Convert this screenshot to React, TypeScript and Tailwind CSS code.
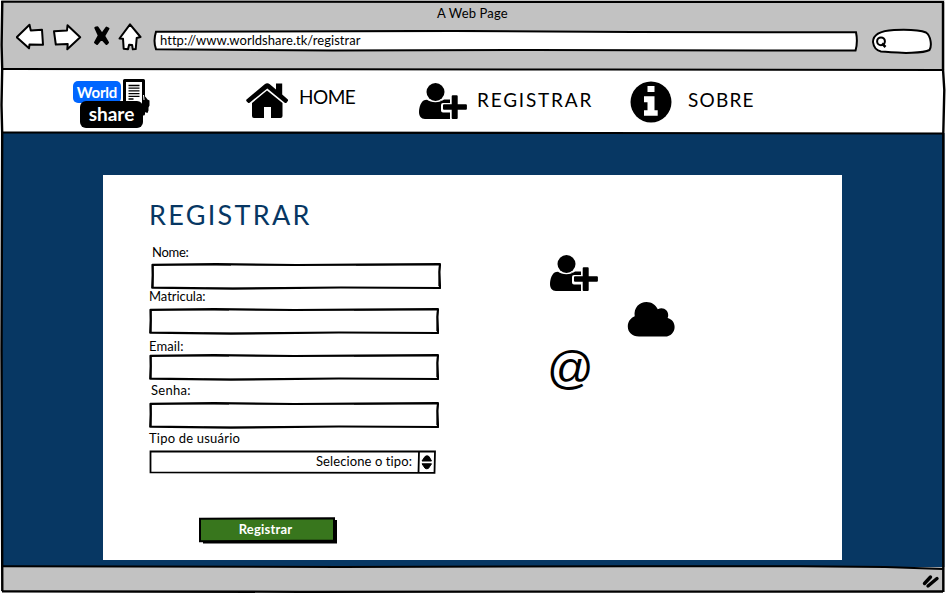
import React from "react";

type IconProps = { className?: string };

function UserPlusIcon({ className = "" }: IconProps) {
  return (
    <svg viewBox="0 0 48 36" className={`block h-9 w-12 shrink-0 ${className}`}>
      <path d="M6 17 C2 18 0 24 0 29 C0 33 2 36 6 36 H31 V16.5 H25 C21 20 12 20 8 16.7Z" fill="#000" />
      <circle cx="16.5" cy="9" r="10" fill="#fff" />
      <circle cx="16.5" cy="9" r="9" fill="#000" />
      <path d="M24 20 Q22 20 22 22V27.5Q22 29.5 24 29.5H31V37.5H40V20Z" fill="#fff" />
      <path d="M21 17.8h6.5l1.5 2.2h-6z" fill="#000" />
      <path d="M33.7 12.2h4q1 0 1 1v8h8.2q1 0 1 1v3.6q0 1-1 1h-8.2v8.2q0 1-1 1h-4q-1 0-1-1v-8.2H25q-1 0-1-1v-3.6q0-1 1-1h7.7v-8q0-1 1-1z" fill="#000" />
    </svg>
  );
}

function HomeIcon() {
  return (
    <svg viewBox="0 0 42 35" className="block h-[35px] w-[42px] shrink-0">
      <path d="M6 20 21 7.4 36.5 20V33q0 2-2 2H25V24H18V35H8q-2 0-2-2Z" />
      <path d="M.5 18.2Q-.3 17 .8 16.2L18.7 1.2Q21.3-.9 23.8 1.2L30 6.4V.5h6.2v11.1l5.4 4.6q1 .9.2 1.9l-1.3 1.6q-.8.8-1.8 0L21.3 5.4 3.6 19.8q-1 .7-1.8-.2Z" />
    </svg>
  );
}

function InfoIcon() {
  return (
    <svg viewBox="0 0 42 42" className="block h-[42px] w-[42px] shrink-0">
      <circle cx="21" cy="21" r="20.5" />
      <path d="M17.5 5h7v6h-7zM14 15.2h10.5v14h3.2v5.5H14v-5.5h3.5v-8H14z" fill="#fff" />
    </svg>
  );
}

function CloudIcon() {
  return (
    <svg viewBox="0 0 48 36" className="block h-9 w-12">
      <path d="M12 35.5C5 35.5.8 31 .8 25.5c0-5 3-8.5 6.9-10.2C6.5 6.5 12.5 1 19.5 1c5 0 9.2 2.8 11.3 7.3 5-2.8 10.6.5 10.4 6 0 1-.2 1.8-.6 2.6 4 .9 7 4.4 7 9 0 5.3-4 9.6-9.6 9.6Z" />
    </svg>
  );
}

function DocumentIcon() {
  return (
    <svg viewBox="0 0 30 37" className="absolute left-[50px] top-0 h-[37px] w-[30px]">
      <path d="M1.5 1.5h19V35h-19z" fill="#fff" stroke="#000" strokeWidth="3" strokeLinejoin="round" />
      <path d="M5.5 6.5h11M5.5 9.2h11M5.5 11.9h11M5.5 14.6h11M5.5 17.3h11M5.5 20h5" stroke="#000" strokeWidth="1.3" />
      <path d="M21 16.5l2 2 1.5 2 2 1v5l-1 2v3l-1 2.5-3-1-.5-3-2-1v-10z" fill="#000" />
      <path d="M20.5 16l.5 5" stroke="#fff" />
    </svg>
  );
}

function ToolbarIcons() {
  return (
    <svg viewBox="0 0 128 30" className="block h-[30px] w-32 shrink-0" fill="#fff" stroke="#000" strokeWidth="2" strokeLinejoin="round">
      <path d="M.7 14.3 13.5 1.8 14.8 7.6 26 6.8 27 21.8 13.5 21.5 13 25.3Z" />
      <path d="M38 8.3 51 7.5 51.5 2.3 64.2 14.3 51.3 26.3 51.7 21.1 39.8 21.5Z" />
      <path d="M79.3 4.8 81.5 4.3 86 10.8 90.5 4.6 92.5 5.6 88.2 13 92 19.5 90.5 21 85.5 15.5 81 21 79 19.5 82.8 12.5Z" fill="#000" />
      <path d="M114 1.3 124.5 14 120.7 15 119.7 26.1 116.8 26.3 116.1 22 113.1 21.7 112 26.3 107.7 25.8 107 15.8 103.5 15.5Z" />
    </svg>
  );
}

function SketchOutline() {
  return (
    <svg viewBox="0 0 290 27" preserveAspectRatio="none" className="absolute inset-0 h-full w-full" fill="none" stroke="#000" strokeLinejoin="round">
      <path d="M1.5 1.8 65 1.2 145 2 210 1.7 289 1.2 288.4 9 289 25 190 24.5 82 25.6 1.2 24.7 1.7 12Z" strokeWidth="2.2" />
      <path d="M2 1.5 80 2M205 2 288 1.5M288.5 4 288 23M2 3 2 24M55 25.3 150 25.2" strokeWidth="1.2" />
    </svg>
  );
}

type FieldProps = { label: string; labelClass: string; inputClass: string };

function Field({ label, labelClass, inputClass }: FieldProps) {
  return (
    <div>
      <div className={`h-4 whitespace-nowrap text-[13px] leading-4 ${labelClass}`}>{label}</div>
      <div className={`relative h-[27px] w-[290px] ${inputClass}`}>
        <SketchOutline />
      </div>
    </div>
  );
}

function BrowserBar() {
  return (
    <header className="flex h-[70px] flex-col bg-[#c2c2c2]">
      <div className="ml-[437px] mt-[5px] h-4 whitespace-nowrap text-[13px] leading-4 tracking-[0.15px]">A Web Page</div>
      <div className="flex h-[30px] pl-4">
        <div className="mt-[2px]"><ToolbarIcons /></div>
        <div className="relative ml-[9px] mt-[9px] h-[22px] w-[706px]">
          <svg viewBox="0 0 706 22" className="absolute inset-0 h-full w-full" fill="#fff" stroke="#000" strokeWidth="2">
            <path d="M3 1.7 300 .9 480 2 703 2.3Q705 12 702.5 20.6L380 20 180 20.5 3 19.2Q0 11 3 1.7Z" />
          </svg>
          <span className="relative ml-[7px] block whitespace-nowrap pt-[2px] text-[13px] leading-4 tracking-[0.03px]">http://www.worldshare.tk/registrar</span>
        </div>
        <svg viewBox="0 0 60 26" className="ml-[13px] mt-[7px] block h-[26px] w-[60px] shrink-0" stroke="#000" fill="#fff" strokeWidth="2">
          <path d="M1 14C1 5 11 2.6 22 2 34 1.5 48 2 54 4.5 59 8 60 18 57.5 22 52 25 42 24.5 34 25 24 24.5 15 24 9 23.5Q2 22 1 14Z" />
          <circle cx="9" cy="13.3" r="3.9" />
          <path d="m10 15.5 3.5 3.5" strokeWidth="2.5" />
        </svg>
      </div>
    </header>
  );
}

function Logo() {
  return (
    <div className="relative ml-[73px] mt-[9px] h-[50px] w-[80px] shrink-0 text-white">
      <DocumentIcon />
      <div className="absolute left-0 top-[2px] h-[22px] w-12 rounded-[5px] bg-[#0066ff] text-center text-[15px] font-bold leading-[22px] tracking-[-0.2px]">World</div>
      <div className="absolute left-[7px] top-[22px] h-[27px] w-[63px] rounded-md bg-black text-center text-[19px] font-bold leading-[26px]">share</div>
    </div>
  );
}

function Navigation() {
  return (
    <nav className="flex h-[63px] items-start bg-white text-[19px] leading-6">
      <Logo />
      <div className="ml-[93px] mt-[13px]"><HomeIcon /></div>
      <span className="ml-[11px] mt-[15px] w-[61px] whitespace-nowrap tracking-[-0.5px]">HOME</span>
      <UserPlusIcon className="ml-[59px] mt-[13px]" />
      <span className="ml-[10px] mt-[18px] w-[120px] whitespace-nowrap tracking-[1.8px]">REGISTRAR</span>
      <div className="ml-[33px] mt-[11px]"><InfoIcon /></div>
      <span className="ml-4 mt-[18px] whitespace-nowrap tracking-[1.2px]">SOBRE</span>
    </nav>
  );
}

function RegistrationForm() {
  return (
    <div className="w-[400px] pl-[46px] pt-6">
      <h1 className="h-8 whitespace-nowrap text-[27px] leading-8 tracking-[2.3px] text-[#073763]">REGISTRAR</h1>
      <div className="mt-[13px]">
        <Field label="Nome:" labelClass="ml-[3px] tracking-[-0.3px]" inputClass="ml-[2px] mt-[3px]" />
      </div>
      <div className="-mt-[2px]">
        <Field label="Matricula:" labelClass="tracking-[-0.05px]" inputClass="mt-1" />
      </div>
      <div className="mt-[3px]">
        <Field label="Email:" labelClass="tracking-[0.1px]" inputClass="" />
      </div>
      <div className="mt-px">
        <Field label="Senha:" labelClass="ml-[2px] tracking-[0.3px]" inputClass="mt-1" />
      </div>
      <div className="mt-px h-4 text-[13px] leading-4 tracking-[0.2px]">Tipo de usuário</div>
      <div className="relative mt-1 flex h-6 w-[287px] justify-end pr-6 pt-[3px] text-[13px] leading-4 tracking-[0.1px]">
        <svg viewBox="0 0 287 24" className="absolute inset-0 h-full w-full" fill="none" stroke="#000" strokeWidth="1.8">
          <path d="M1.5 1.5H286L285.5 22.8 1.5 22.4ZM270 1.5 269.5 22.5" />
          <path d="m273 11 3-4.5q2-1.5 4 0L282.5 11ZM273 13.8h9.5l-3 4.5q-1.7 1-3.4 0Z" fill="#000" strokeWidth="1" strokeLinejoin="round" />
        </svg>
        Selecione o tipo:
      </div>
      <button className="relative ml-[50px] mt-[43px] block h-[27px] w-[138px] text-[13px] font-bold text-white">
        <svg viewBox="0 0 138 27" className="absolute inset-0 h-full w-full">
          <path d="M4 3H138V26.5H4Z" />
          <path d="M1 1.7 135 1.2V23.5L1 24.2Z" fill="#38761d" stroke="#000" strokeWidth="2" />
        </svg>
        <span className="relative -mt-[3px] block pr-[5px] leading-4 tracking-[0.2px]">Registrar</span>
      </button>
    </div>
  );
}

function WindowOutline() {
  return (
    <svg viewBox="0 0 946 594" className="pointer-events-none absolute inset-0 h-full w-full" fill="none" stroke="#000" strokeWidth="2">
      <path d="M.5 0V594M945.5 0V594" stroke="#fff" strokeWidth="2" />
      <path d="M1 1.8 944 2" />
      <path d="M2.3 1 1.6 45 2.2 69 1.5 105 2.2 133 1.5 350 2.3 591" strokeWidth="2.4" />
      <path d="M943 2V69L944.3 90 943.3 133V592" strokeWidth="2.4" />
      <path d="M2 69 330 69.3 600 69.5 944 70" />
      <path d="M2 132.5 230 132.7 600 133 944 133.5" strokeWidth="2.2" />
      <path d="M2 566.3 340 567 640 566.3 800 566.2 885 567 943 569" />
      <path d="M2 591.3 300 591.8 943 591.5" strokeWidth="2.3" />
      <path d="m924.5 583.5 6-6.5m-2.5 9 9-7.5" strokeWidth="3.4" strokeLinecap="round" />
    </svg>
  );
}

export default function App() {
  return (
    <div className="relative flex h-[594px] w-[946px] flex-col overflow-hidden bg-white font-['Lato',sans-serif] text-black">
      <BrowserBar />
      <Navigation />
      <main className="h-[434px] bg-[#073763] pl-[103px] pt-[42px]">
        <section className="flex h-[385px] w-[739px] bg-white">
          <RegistrationForm />
          <aside className="flex flex-col pl-[47px] pt-20">
            <UserPlusIcon />
            <div className="ml-[77px] mt-[10px]"><CloudIcon /></div>
            <span className="-ml-[3px] mt-[7px] font-['Liberation_Sans',Arial,sans-serif] text-[46px] leading-[48px]">@</span>
          </aside>
        </section>
      </main>
      <footer className="h-[25px] bg-[#c2c2c2]" />
      <WindowOutline />
    </div>
  );
}
